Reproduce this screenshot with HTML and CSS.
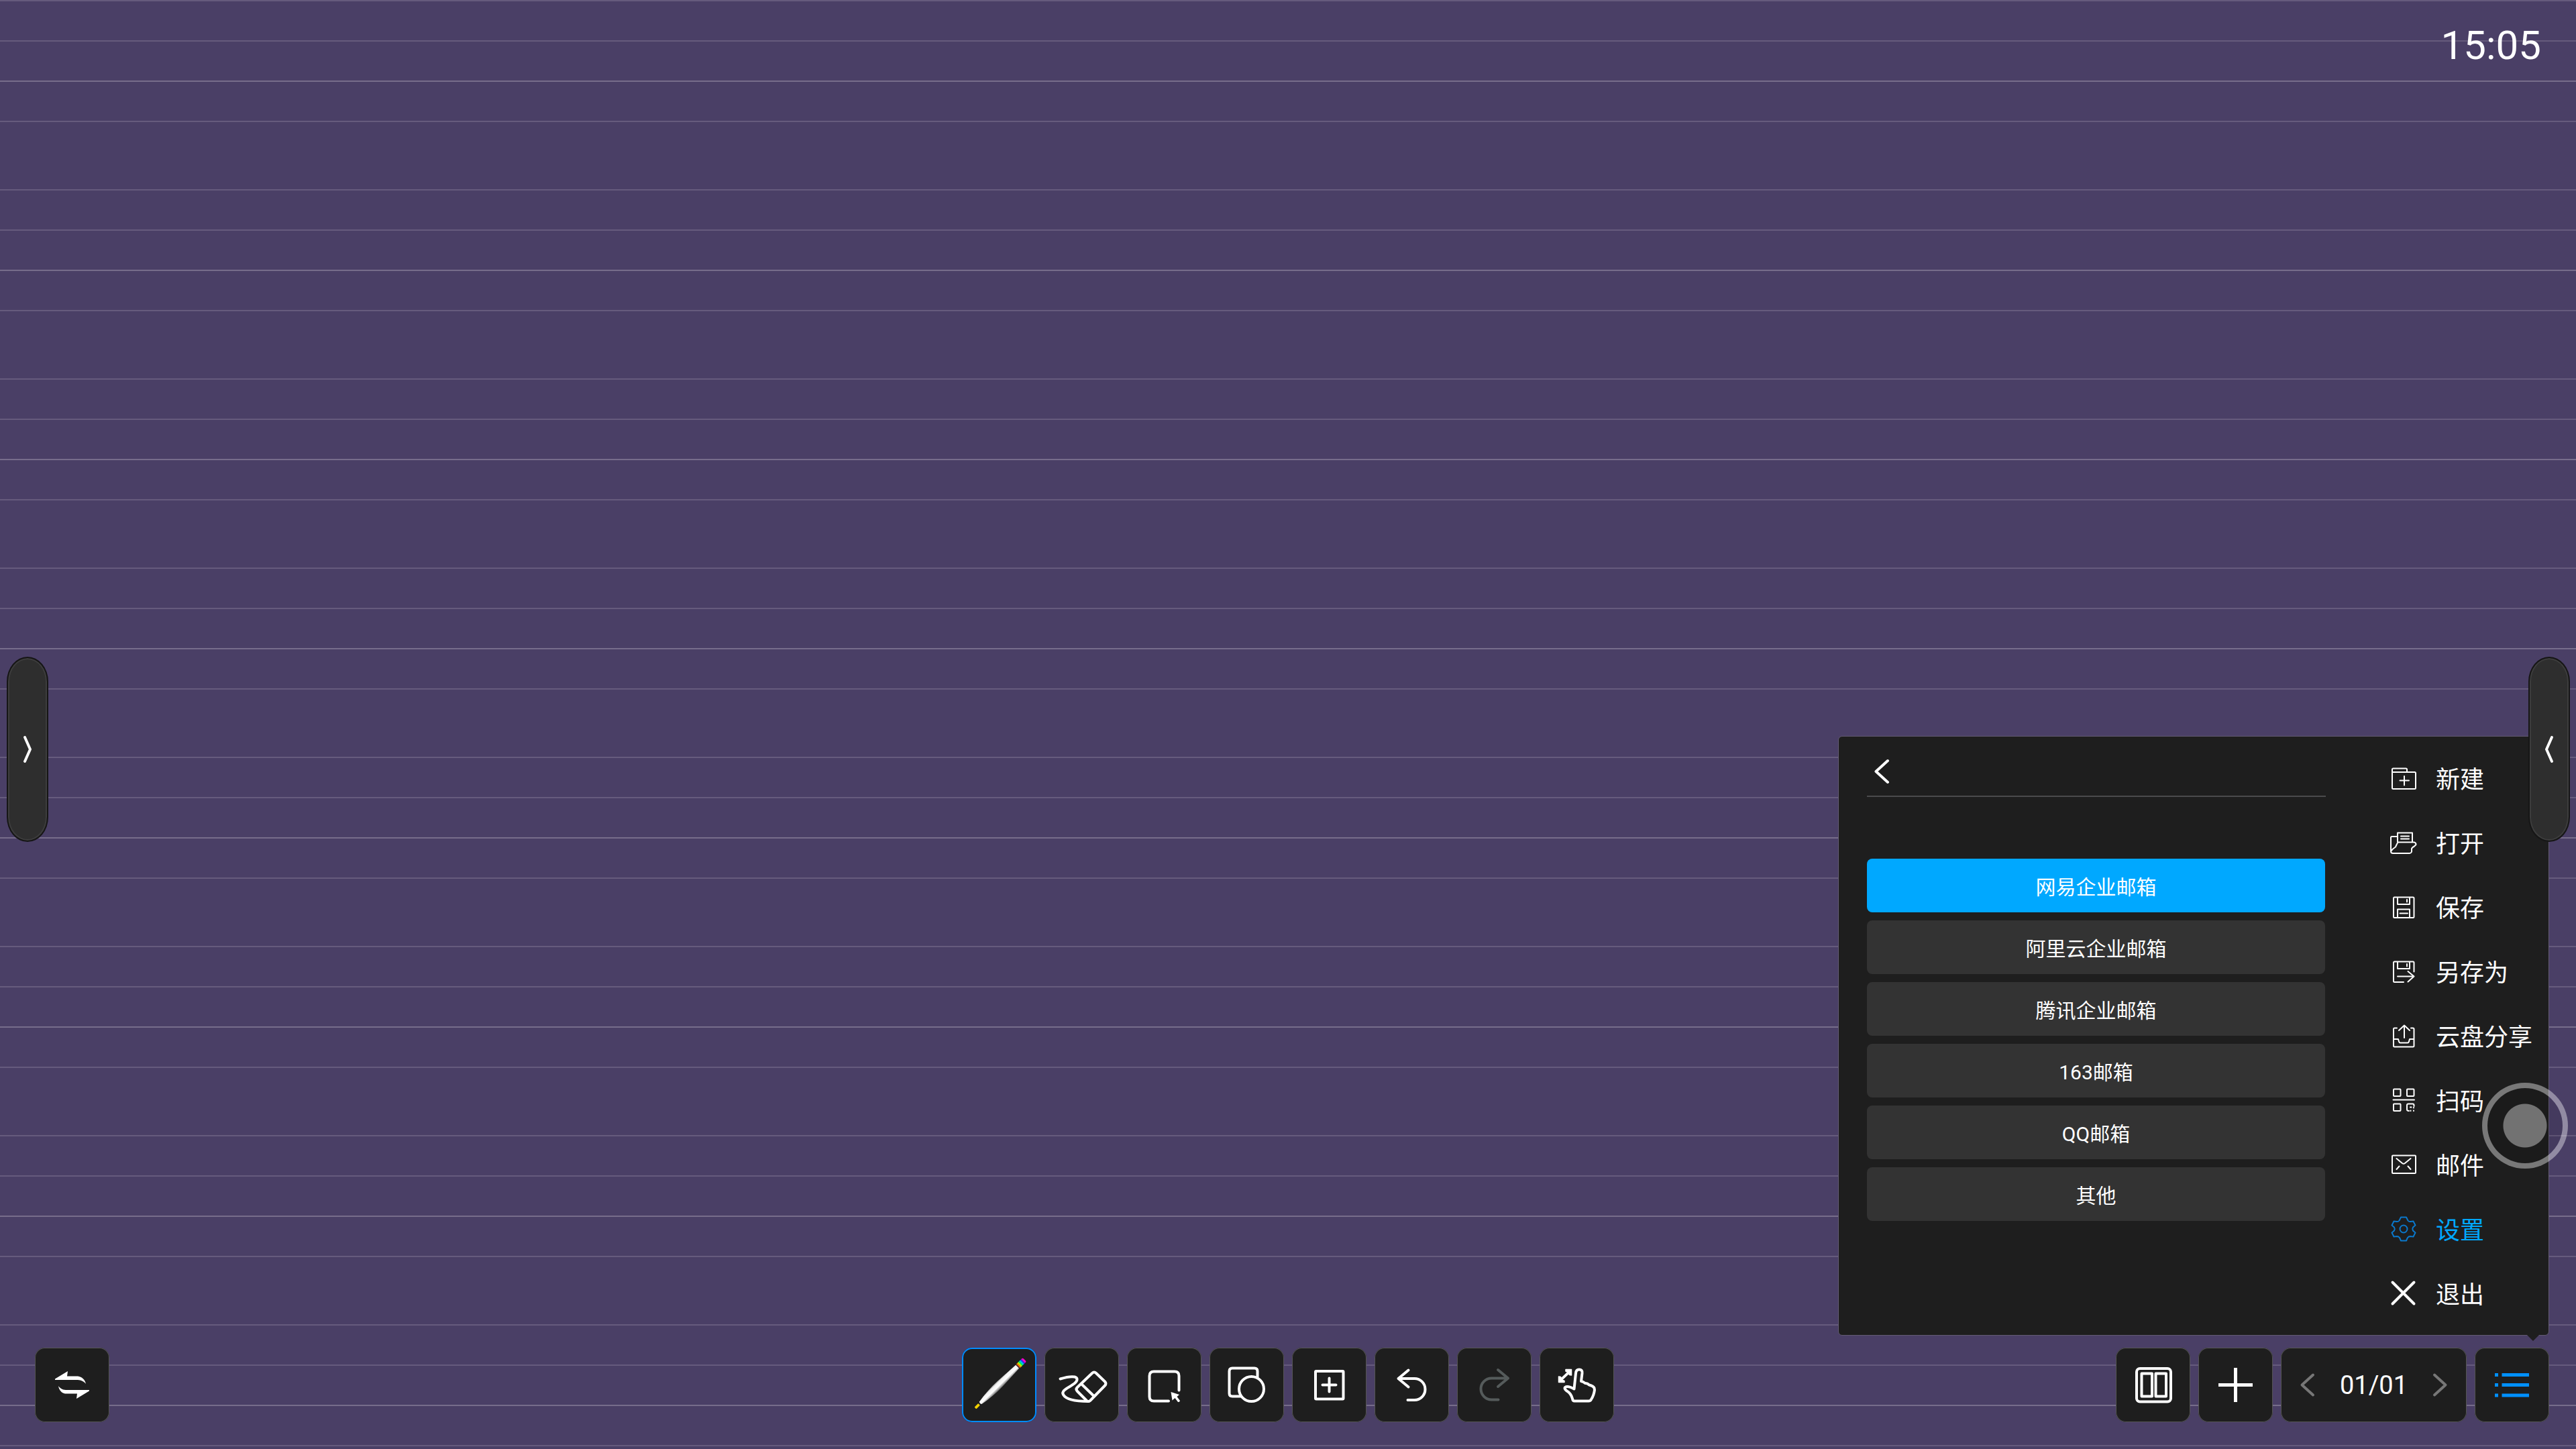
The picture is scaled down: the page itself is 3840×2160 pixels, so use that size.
FILE: index.html
```html
<!DOCTYPE html>
<html lang="zh-CN">
<head>
<meta charset="utf-8">
<title>白板</title>
<link rel="stylesheet" href="styles.css">
</head>
<body class="board">
<header class="topbar"><time class="clock">15:05</time></header>

<main class="canvas"></main>

<footer class="dock">
  <div class="dock-group dock-start">
    <button class="tool" type="button" aria-label="切换">
      <svg viewBox="0 0 111 111"><g class="solid"><path d="M30 46.5 49 35 48 42.5H64C70 43 75 48 76 54 73 50 69 48.500 64 48H30Z"/><path d="M81 64.500 62 76 63 68.500H45C40 68 36 63 35 57 38 61 41 62.500 46 63H81Z"/></g></svg>
    </button>
  </div>

  <div class="dock-group">
    <button class="tool tool-active" type="button" aria-label="笔">
      <svg viewBox="0 0 111 111">
        <defs><linearGradient id="barrel" x1="0" y1="0" x2="0" y2="1"><stop offset="0" stop-color="#999"/><stop offset=".2" stop-color="#f4f4f4"/><stop offset=".6" stop-color="#fff"/><stop offset="1" stop-color="#666"/></linearGradient></defs>
        <g transform="translate(27 83) rotate(-44.500)">
          <rect x="-10" y="-2" width="8" height="4" rx="1" fill="#f0d000"/>
          <path d="M1 -2.500C14 -5 28 -6 42 -5.500L78 -3.500V3.500L42 5.500C28 6 14 5 1 2.500Q-1 0 1 -2.500Z" fill="url(#barrel)"/>
          <path fill="#a33" d="M79-4h1v8h-1z"/><path fill="#f80" d="M80-4h2v8h-2z"/><path fill="#cf0" d="M82-4h2v8h-2z"/><path fill="#0f6" d="M84-4h2v8h-2z"/><path fill="#0cf" d="M86-4h2v8h-2z"/><path fill="#33f" d="M88-4h2v8h-2z"/><path fill="#f0c" d="M90-4h1q2 0 2 2v4q0 2-2 2h-1z"/>
        </g>
      </svg>
    </button>
    <button class="tool" type="button" aria-label="橡皮擦">
      <svg viewBox="0 0 111 111"><g class="line"><path d="M23.500 46.500C30 44.500 40 42.500 45 43.500 50 45 49.500 49 45 53 38 59 24 63 28 70 32 77 46 80 65 80"/><path d="M71 38Q74 35 77 38L90 50.500Q93 53.500 90 56.500L68 79Q65.500 81 63 79L49 65Q46 62 49 59ZM55.500 54.500 73 71.500"/></g></svg>
    </button>
    <button class="tool" type="button" aria-label="选择">
      <svg viewBox="0 0 111 111"><path class="line" d="M77.500 63.500V42Q77.500 35.500 71 35.500H40Q33.500 35.500 33.500 42V73Q33.500 79.500 40 79.500H62"/><path class="solid" d="M65.500 66 78 70 74.500 73 79 79Q78.500 81.500 76 81L71.500 75 67.500 78.500Z"/></svg>
    </button>
    <button class="tool" type="button" aria-label="图形">
      <svg viewBox="0 0 111 111"><g class="line"><path d="M71.500 43.500V35Q71.500 30.500 67 30.500H34Q29.500 30.500 29.500 35V68Q29.500 72.500 34 72.500H47"/><circle cx="62.500" cy="61.500" r="18.500"/></g></svg>
    </button>
    <button class="tool" type="button" aria-label="插入">
      <svg viewBox="0 0 111 111"><g class="line"><rect x="35" y="35" width="41.500" height="41.500" rx="1"/><path d="M55.500 45.500V65.500M45.500 55.500H65.500"/></g></svg>
    </button>
    <button class="tool" type="button" aria-label="撤销">
      <svg viewBox="0 0 111 111"><path class="line" d="M50.500 33.500 35.500 46 50.500 58.500M35.500 46H59.500A16 16 0 0 1 59.500 78H49.500"/></svg>
    </button>
    <button class="tool tool-off" type="button" aria-label="重做">
      <svg viewBox="0 0 111 111"><path class="line" d="M61 33 76 45.500 61 58M76 45.500H51.500A16 16 0 0 0 51.500 77.500H61.500"/></svg>
    </button>
    <button class="tool" type="button" aria-label="手势">
      <svg viewBox="0 0 111 111"><path class="line" d="M51.500 61.500 54 38Q54.500 32.500 59 32.500 64 32.500 63.500 38L62 50Q65 50.500 68 53 71 52.500 74 55.500 80 57 81.500 60L82 63Q81 71 77 77 76 79.500 73 79.500H52Q49.500 79.500 49 76 47 68 40 64 36.500 61 38 59 42 56 51.500 61.500Z"/><g class="solid"><path d="M39 32.500H47.500V41L44.500 40.500 43.500 38.500 33.500 48 37 49.500V51.500H28.500V43L31.500 43.500 32 46 42 36.500 39 35Z" stroke="#fff" stroke-width="1.500" stroke-linejoin="round"/></g></svg>
    </button>
  </div>

  <div class="dock-group dock-end">
    <button class="tool" type="button" aria-label="页面">
      <svg viewBox="0 0 111 111"><g class="line"><rect x="31" y="31" width="51" height="49.500" rx="5"/><rect x="38.500" y="38.500" width="15.500" height="34"/><rect x="59.500" y="38.500" width="15.500" height="34"/></g></svg>
    </button>
    <button class="tool" type="button" aria-label="新增页面">
      <svg viewBox="0 0 111 111"><path class="bar" d="M55.500 30V81M30 55.500H81"/></svg>
    </button>
    <div class="pager">
      <button class="step" type="button" aria-label="上一页"><svg viewBox="0 0 78 111"><path class="line" d="M48 40.500 31.500 55.500 48 70.500"/></svg></button>
      <span class="count">01/01</span>
      <button class="step" type="button" aria-label="下一页"><svg viewBox="0 0 78 111"><path class="line" d="M30 40.500 46.500 55.500 30 70.500"/></svg></button>
    </div>
    <button class="tool tool-menu" type="button" aria-label="菜单" aria-expanded="true">
      <svg viewBox="0 0 111 111"><path class="bar" d="M30 40.500H35M40.500 40.500H81M30 55.500H35M40.500 55.500H81M30 71H35M40.500 71H81"/></svg>
    </button>
  </div>
</footer>

<section class="panel" aria-label="菜单">
  <div class="detail">
    <div class="detail-head">
      <button class="back" type="button" aria-label="返回"><svg viewBox="0 0 22 36"><path class="line" d="M20 2 2.500 18 20 34"/></svg></button>
    </div>
    <div class="mailboxes">
      <button class="mailbox mailbox-on" type="button">网易企业邮箱</button>
      <button class="mailbox" type="button">阿里云企业邮箱</button>
      <button class="mailbox" type="button">腾讯企业邮箱</button>
      <button class="mailbox" type="button">163邮箱</button>
      <button class="mailbox" type="button">QQ邮箱</button>
      <button class="mailbox" type="button">其他</button>
    </div>
  </div>
  <nav class="menu">
    <button class="item" type="button"><svg viewBox="0 0 48 48"><path class="thin" d="M7 14V10Q7 8.500 8.500 8.500H27.500Q29 8.500 29 10V14H40.500Q42 14 42 15.500V37.500Q42 39 40.500 39H8.500Q7 39 7 37.500V14H29M25 20V33.500M18.500 26.500H32"/></svg>新建</button>
    <button class="item" type="button"><svg viewBox="0 0 48 48"><path class="thin" d="M15 22V8.500H37V22M20 13.500H32M20 17.500H32M15 14H6.500Q5 14 5 15.500V36Q5 39 8 39H33Q35 39 36 36.500V32Q37 30 40 28.500L42.500 26Q42.500 23 39.500 22.500H15.500Q13.500 26 12 29.500 8 32 5.500 35.500"/></svg>打开</button>
    <button class="item" type="button"><svg viewBox="0 0 48 48"><path class="thin" d="M10 8.500H38Q39.500 8.500 39.500 10V37.500Q39.500 39 38 39H10.500Q9 39 9 37.500V10Q9 8.500 10.500 8.500ZM15 8.500V19H33V8.500M29 12V15.500M15 39V26.500H33V39M18.500 32.500H30"/></svg>保存</button>
    <button class="item" type="button"><svg viewBox="0 0 48 48"><path class="thin" d="M24 39H10.500Q9 39 9 37.500V10Q9 8.500 10.500 8.500H38Q39.500 8.500 39.500 10V23.500M15 8.500V19H33V8.500M29 12V15.500M15 30.500H39.500M30.500 23 39.500 30.500 30.500 38.500"/></svg>另存为</button>
    <button class="item" type="button"><svg viewBox="0 0 48 48"><path class="thin" d="M14 11.500H10.500Q9 11.500 9 13V38Q9 39.500 10.500 39.500H38Q39.500 39.500 39.500 38V13Q39.500 11.500 38 11.500H35M25 26V7.500M17 15 25 7.500 33 15M9 28H16L17 31.500Q17.500 33.500 19 33.500H30Q31.500 33.500 32 31.500L33 28H39.500"/></svg>云盘分享</button>
    <button class="item" type="button"><svg viewBox="0 0 48 48"><g class="thin"><rect x="9" y="6.500" width="10.500" height="10.500" rx="1"/><rect x="29" y="6.500" width="10.500" height="10.500" rx="1"/><rect x="9" y="28.500" width="10.500" height="10.500" rx="1"/><path d="M8.500 22.500H40M32 39Q29 39 29 37V30.500Q29 28.500 31 28.500H37.500Q39.500 28.500 39.500 30.500V32M39 34V34.500M34 33.500H35.500M34.500 38.500V39M39 38.500V39"/></g></svg>扫码</button>
    <button class="item" type="button"><svg viewBox="0 0 48 48"><g class="thin"><rect x="7" y="9.500" width="35" height="26.500" rx="1"/><path d="M13.500 14 22 21Q24 22.500 26 21L34.500 14M17.500 25.500 13.500 30M30.500 25.500 34.500 30"/></g></svg>邮件</button>
    <button class="item item-on" type="button"><svg viewBox="0 0 48 48"><g class="thin"><path d="M20 5.500H28L30.500 10.500Q32 12.500 34.500 12L38.500 11.500 41.500 17.500 38 20.500Q36.500 23 38 25.500L41.500 28.500 38.500 34.500 34 34Q31.500 34 30 36L28 40.500H20L18 36Q16.500 34 14 34L9.500 34.500 6.500 28.500 10 25.500Q11.500 23 10 20.500L6.500 17.500 9.500 11.500 13.500 12Q16 12.500 17.500 10.500Z"/><circle cx="24" cy="23" r="5.500"/></g></svg>设置</button>
    <button class="item" type="button"><svg viewBox="0 0 48 48"><path class="bold" d="M7.500 6.500 39.500 38.500M39.500 6.500 7.500 38.500"/></svg>退出</button>
  </nav>
</section>

<button class="handle handle-left" type="button" aria-label="展开左侧栏"><svg viewBox="0 0 12 40"><path class="line" d="M2 2 10 20 2 38"/></svg></button>
<button class="handle handle-right" type="button" aria-label="展开右侧栏"><svg viewBox="0 0 12 40"><path class="line" d="M10 2 2 20 10 38"/></svg></button>
<button class="assist" type="button" aria-label="悬浮球"></button>
</body>
</html>
```
FILE: styles.css
```css
* { box-sizing: border-box; }

button {
  margin: 0;
  padding: 0;
  border: 0;
  background: none;
  color: inherit;
  font: inherit;
  cursor: pointer;
}

svg { display: block; overflow: visible; }

/* Ruled staff paper: four lines, then a wider gap */
.board {
  position: relative;
  display: flex;
  flex-direction: column;
  min-height: 100vh;
  margin: 0;
  overflow: hidden;
  color: #fff;
  font-family: Roboto, "Noto Sans CJK SC", sans-serif;
  background: #4a3f66 linear-gradient(
    #665b7d 0 2px, transparent 2px 60px,
    #665b7d 60px 62px, transparent 62px 120px,
    #776d8b 120px 122px, transparent 122px 180px,
    #665b7d 180px 182px, transparent 182px) 0 0 / 100% 282px;
}

.topbar {
  display: flex;
  justify-content: flex-end;
  padding: 32px 52px 0;
}

.clock { font-size: 60px; line-height: 72px; }

.canvas { flex: 1; }

.line, .bar, .thin, .bold {
  fill: none;
  stroke: currentColor;
  stroke-linecap: round;
  stroke-linejoin: round;
}
.line { stroke-width: 4px; }
.bar { stroke-width: 5px; stroke-linecap: butt; }
.thin { stroke-width: 2px; }
.bold { stroke-width: 4px; }
.solid { fill: currentColor; }

/* Bottom toolbar */
.dock {
  display: grid;
  grid-template-columns: 1fr auto 1fr;
  padding: 0 40px 40px;
}
.dock-group { display: flex; gap: 12px; }
.dock-start { padding-left: 12px; }
.dock-end { justify-content: flex-end; }

.tool, .pager {
  height: 111px;
  border-radius: 15px;
  background: #1e1e1e;
  box-shadow: inset 0 0 0 1px #555;
}
.tool { width: 111px; }
.tool-active { box-shadow: inset 0 0 0 2px #008cff; }
.tool-off { color: #555b5b; }
.tool-menu { color: #0090ff; }

.pager {
  display: flex;
  align-items: center;
  justify-content: space-between;
  width: 277px;
}
.step { width: 78px; color: #777; }
.count { font-size: 38px; line-height: 48px; }

/* Menu panel */
.panel {
  position: absolute;
  right: 40px;
  bottom: 169px;
  display: flex;
  width: 1060px;
  border: 1px solid #635b73;
  border-radius: 6px;
  background: #1e1e1e;
}
.panel::after {
  content: "";
  position: absolute;
  right: 14px;
  bottom: -9px;
  width: 18px;
  height: 9px;
  background: #1e1e1e;
  clip-path: polygon(0 0, 100% 0, 50% 100%);
}

.detail {
  width: 726px;
  padding-left: 42px;
}
.detail-head {
  display: flex;
  align-items: center;
  height: 90px;
  padding: 15px 11px 0;
  border-bottom: 2px solid #4a4a4c;
}
.back { width: 22px; }
.mailboxes {
  display: flex;
  flex-direction: column;
  gap: 12px;
  padding: 92px 1px 0 0;
}
.mailbox {
  height: 80px;
  border-radius: 8px;
  background: #333;
  font-size: 30px;
}
.mailbox-on { background: #00a8ff; }

.menu {
  display: flex;
  flex: 1;
  flex-direction: column;
  padding: 15px 0 13px 92px;
}
/* The icons sit slightly below the line of the labels */
.item {
  display: flex;
  align-items: center;
  gap: 24px;
  height: 96px;
  padding-bottom: 4px;
  font-size: 36px;
  white-space: nowrap;
}
.item svg { width: 48px; margin-top: 4px; }
.item-on { color: #00a8ff; }
.item-on svg { color: #0a78cc; }

/* Drawer handles on both edges */
.handle {
  position: absolute;
  top: 979px;
  display: flex;
  align-items: center;
  justify-content: center;
  width: 62px;
  height: 276px;
  border: 2px solid #161616;
  border-radius: 31px / 37px;
  background: #2e2e2e;
  box-shadow: inset 0 0 0 2px #3d3d3d;
}
.handle svg { width: 12px; }
.handle-left { left: 10px; }
.handle-right { right: 9px; }

/* Floating assist ball */
.assist {
  position: absolute;
  right: 12px;
  top: 1614px;
  width: 128px;
  height: 128px;
  border: 8px solid rgba(255, 255, 255, .4);
  border-radius: 50%;
  background: radial-gradient(circle, #727272 0 32px, rgba(0, 0, 0, .08) 33px) border-box;
  background-clip: padding-box;
}
```
